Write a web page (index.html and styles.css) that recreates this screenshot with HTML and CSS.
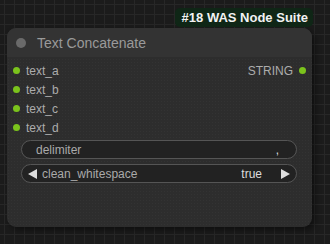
FILE: index.html
```html
<!DOCTYPE html>
<html lang="en">
<head>
    <meta charset="UTF-8">
    <title>Text Concatenate</title>
    <link rel="stylesheet" href="styles.css">
</head>
<body>
    <div class="canvas">
        <div class="badge-row">
            <span class="badge">#18 WAS Node Suite</span>
        </div>
        <div class="node">
            <div class="node-title">
                <span class="title-dot"></span>
                <span class="title-text">Text Concatenate</span>
            </div>
            <div class="slots">
                <div class="slot">
                    <span class="dot"></span>
                    <span class="slot-label">text_a</span>
                    <span class="output">STRING <span class="dot"></span></span>
                </div>
                <div class="slot">
                    <span class="dot"></span>
                    <span class="slot-label">text_b</span>
                </div>
                <div class="slot">
                    <span class="dot"></span>
                    <span class="slot-label">text_c</span>
                </div>
                <div class="slot">
                    <span class="dot"></span>
                    <span class="slot-label">text_d</span>
                </div>
            </div>
            <div class="widgets">
                <div class="widget text-widget">
                    <span class="w-label">delimiter</span>
                    <span class="w-value">,</span>
                </div>
                <div class="widget combo-widget">
                    <span class="arrow left"></span>
                    <span class="w-label">clean_whitespace</span>
                    <span class="w-value">true</span>
                    <span class="arrow right"></span>
                </div>
            </div>
        </div>
    </div>
</body>
</html>
```

FILE: styles.css
```css
body {
    margin: 0;
    width: 330px;
    height: 244px;
    overflow: hidden;
    font-family: "Liberation Sans", Arial, sans-serif;
    background-color: #1b1b1b;
    background-image:
        linear-gradient(#272727 1px, transparent 1px),
        linear-gradient(90deg, #272727 1px, transparent 1px);
    background-size: 10px 10px;
    background-position: 4px 4px;
}

.canvas {
    padding: 8px 0 0 7px;
    width: 305px;
}

.badge-row {
    display: flex;
    justify-content: flex-end;
    margin-right: -1px;
}

.badge {
    background: #0f2616;
    color: #f2f2f2;
    font-weight: bold;
    font-size: 13px;
    line-height: 19px;
    padding: 0 5px 0 7px;
    border-radius: 5px;
}

.node {
    margin-top: 1px;
    width: 305px;
    height: 199px;
    border-radius: 9px;
    background-color: #2d2d2d;
    background-image: radial-gradient(#333333 0.8px, transparent 0.9px);
    background-size: 3px 3px;
    box-shadow: 3px 3px 6px rgba(0, 0, 0, 0.45);
    overflow: hidden;
}

.node-title {
    height: 29px;
    background: #333333;
    display: flex;
    align-items: center;
    padding-left: 9px;
    gap: 11px;
}

.title-dot {
    width: 10px;
    height: 10px;
    border-radius: 50%;
    background: #6a6a6a;
}

.title-text {
    color: #9a9a9a;
    font-size: 14px;
}

.slots {
    padding-top: 4px;
}

.slot {
    height: 19px;
    display: flex;
    align-items: center;
    padding-left: 6px;
    padding-right: 6px;
    font-size: 12px;
    color: #acacac;
}

.dot {
    width: 7px;
    height: 7px;
    border-radius: 50%;
    background: #7bc31c;
}

.slot-label {
    margin-left: 6px;
}

.output {
    margin-left: auto;
    display: flex;
    align-items: center;
    gap: 6px;
}

.widgets {
    margin: 3px 15px 0 14px;
    display: flex;
    flex-direction: column;
    gap: 5px;
}

.widget {
    height: 17px;
    border: 1px solid #555555;
    border-radius: 10px;
    background: #222222;
    display: flex;
    align-items: center;
    font-size: 12px;
    color: #aaaaaa;
}

.text-widget {
    padding: 0 17px 0 14px;
}

.text-widget .w-value {
    margin-left: auto;
    color: #dddddd;
}

.combo-widget {
    padding: 0 6px 0 6px;
}

.combo-widget .w-label {
    margin-left: 5px;
}

.combo-widget .w-value {
    margin-left: auto;
    margin-right: 19px;
    color: #dddddd;
}

.arrow {
    width: 0;
    height: 0;
    border-top: 5px solid transparent;
    border-bottom: 5px solid transparent;
}

.arrow.left {
    border-right: 9px solid #dddddd;
}

.arrow.right {
    border-left: 9px solid #dddddd;
}
```
